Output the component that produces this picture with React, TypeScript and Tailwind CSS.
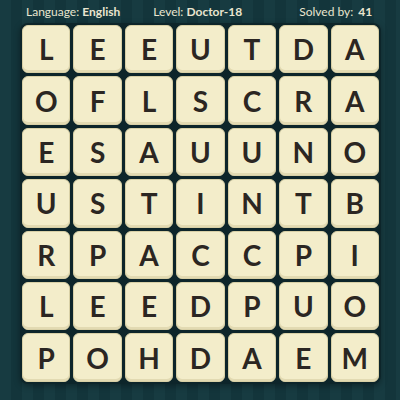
const rows = [
  'LEEUTDA',
  'OFLSCRA',
  'ESAUUNO',
  'USTINTB',
  'RPACCPI',
  'LEEDPUO',
  'POHDAEM',
];

export default function App() {
  return (
    <div className="w-[400px] h-[400px] overflow-hidden bg-[repeating-linear-gradient(90deg,#173b41_0px,#173b41_11px,#13353b_11px,#13353b_22px)] font-['Lato',sans-serif]">
      <div className="flex items-center h-[24px] pl-[26px] text-[12px] text-[#e9e5cf] leading-none">
        <span>
          Language: <b className="font-bold">English</b>
        </span>
        <span className="ml-[33px]">
          Level: <b className="font-bold">Doctor-18</b>
        </span>
        <span className="ml-[57px]">
          Solved by: <b className="font-bold ml-[2px]">41</b>
        </span>
      </div>
      <div className="ml-[20px] mt-[-1px] w-[361px] rounded-[8px] bg-[#0d252a] p-[2px] shadow-[0_2px_6px_rgba(0,0,0,0.35)]">
        <div className="grid grid-cols-7 gap-[3px]">
          {rows.flatMap((row, r) =>
            row.split('').map((ch, c) => (
              <div
                key={`${r}-${c}`}
                className="h-[48.4px] rounded-[6px] bg-[#f3edca] border border-[#d8d0a6] shadow-[inset_0_-2px_0_#e2dab2] flex items-center justify-center text-[28px] font-bold text-[#2b2622]"
              >
                {ch}
              </div>
            ))
          )}
        </div>
      </div>
    </div>
  );
}
